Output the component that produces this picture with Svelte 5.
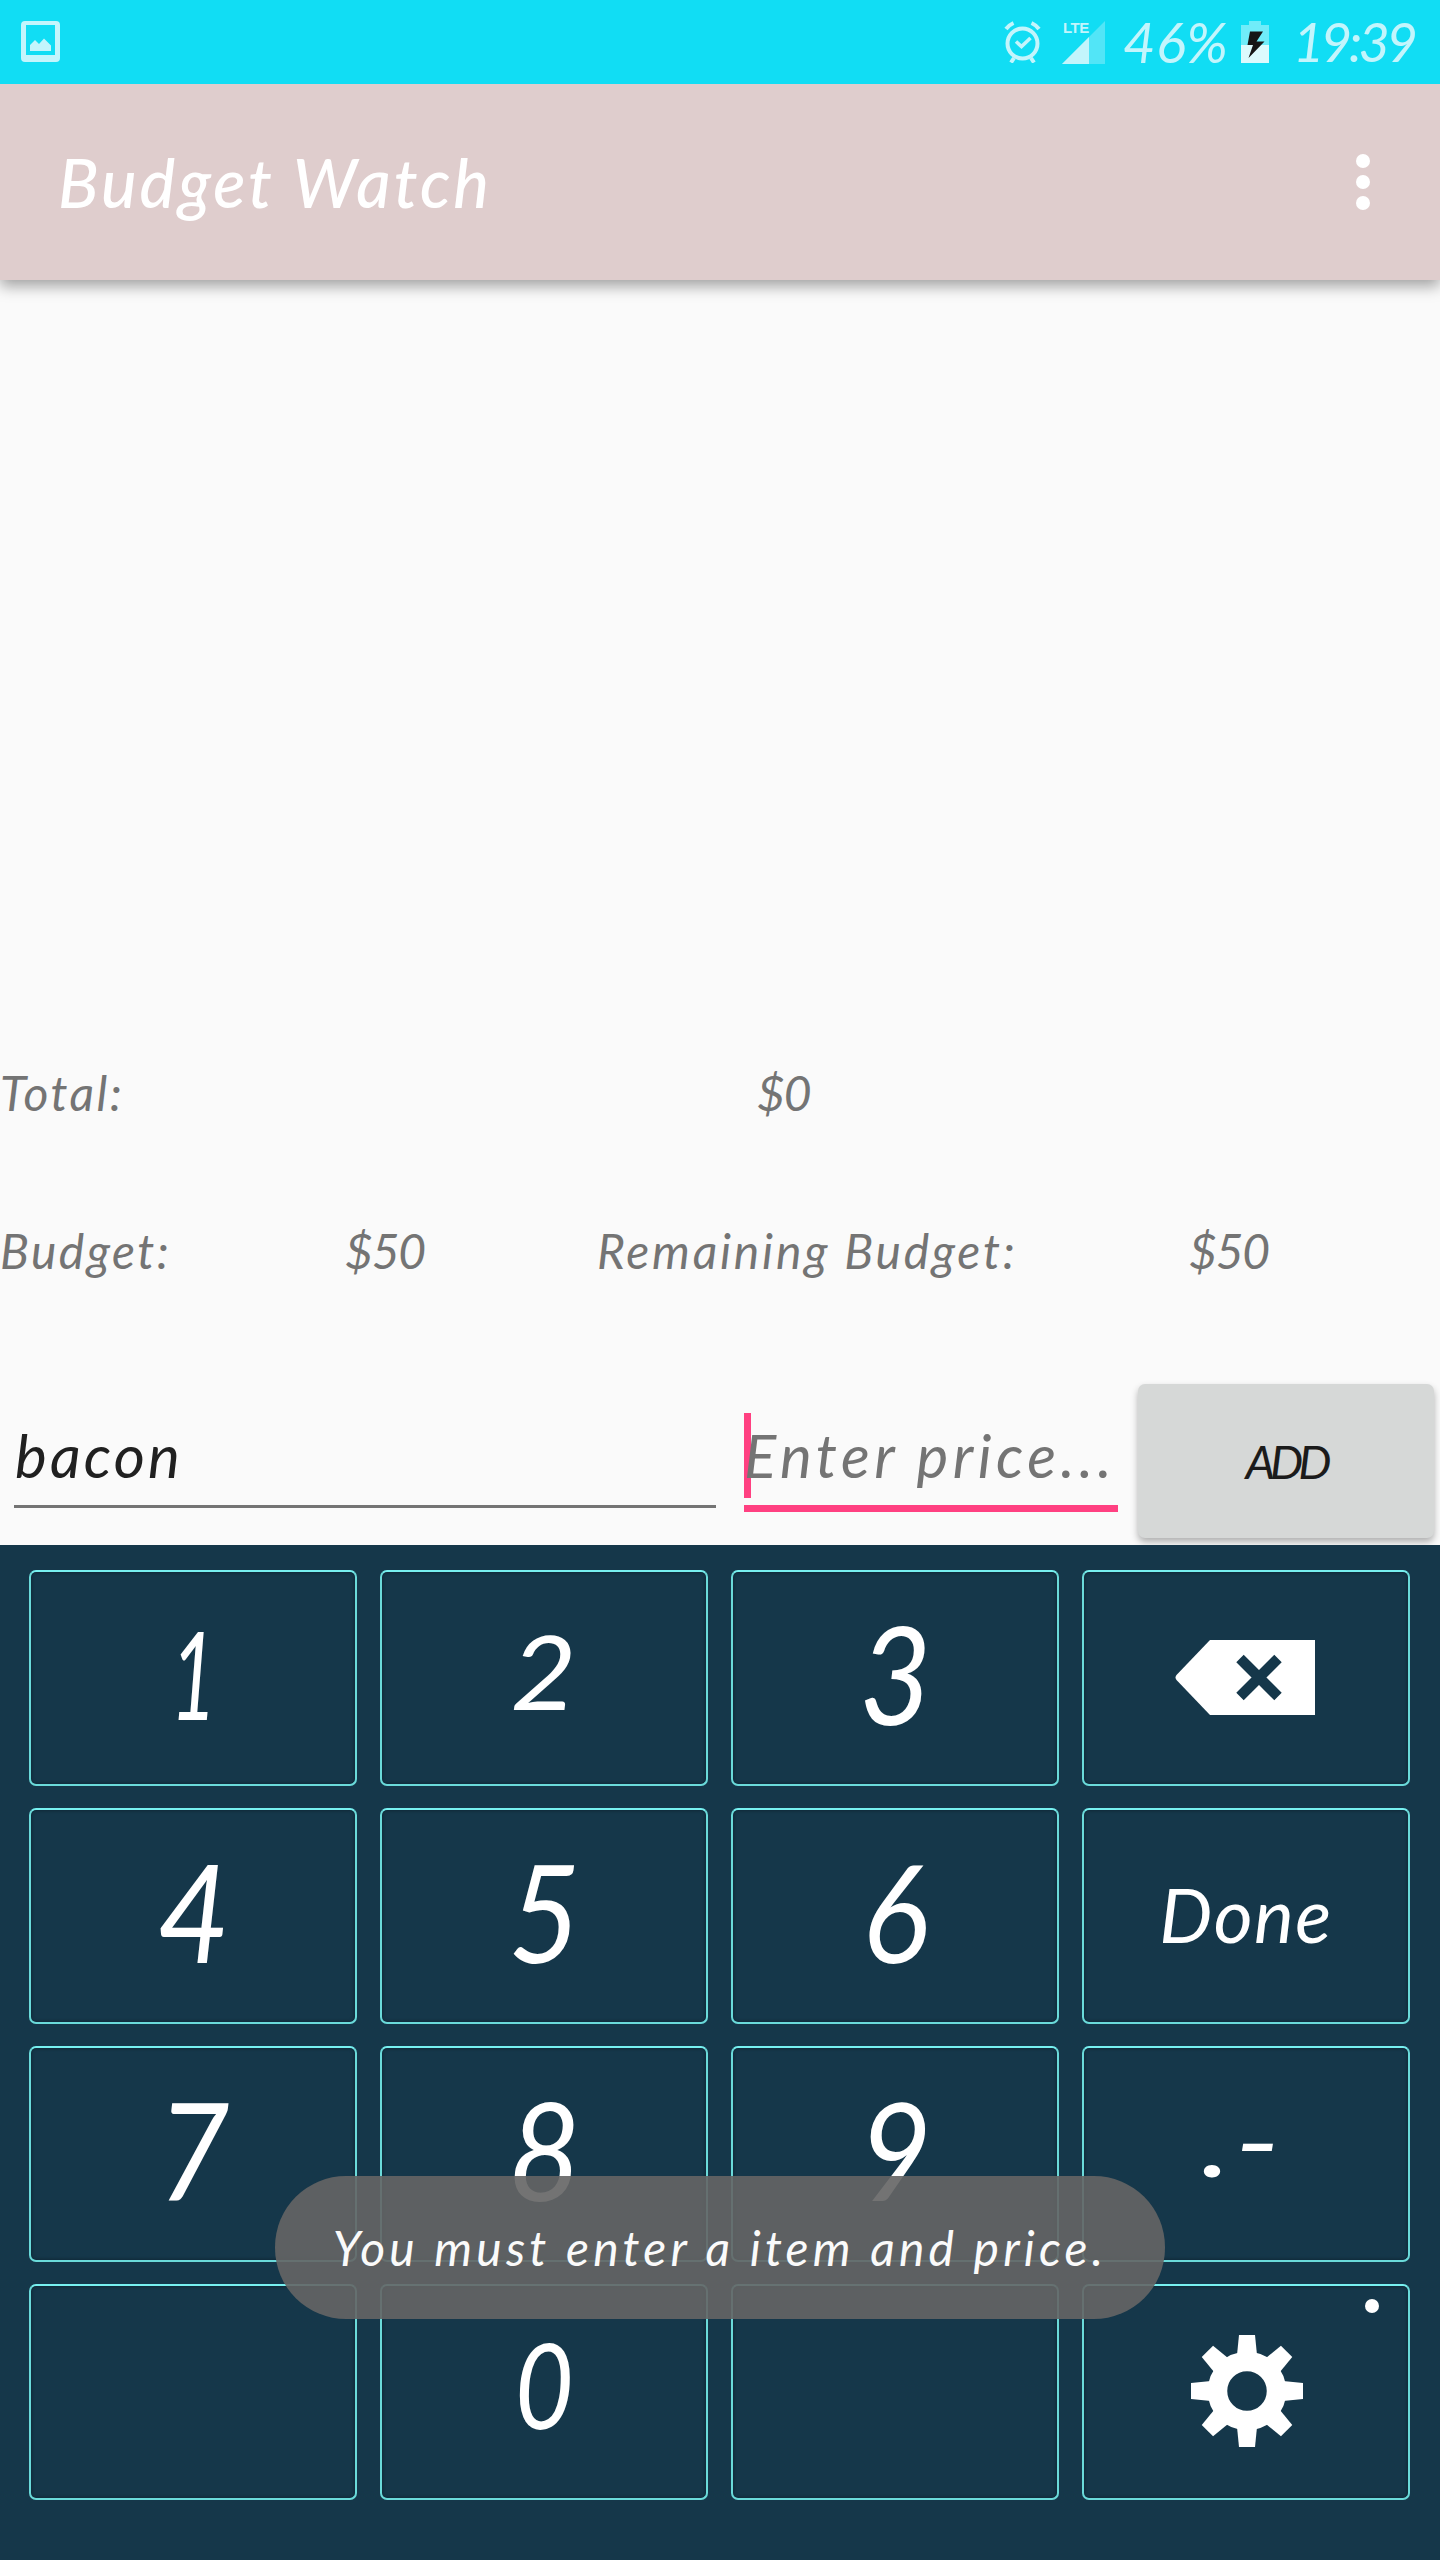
<script>
  const rows = [
    ['1', '2', '3', 'delete'],
    ['4', '5', '6', 'Done'],
    ['7', '8', '9', '.-'],
    ['', '0', '', 'settings']
  ];
  const keys = rows.flat();
  const classes = { Done: 'word', '.-': 'punct', 0: 'zero', 1: 'one', 2: 'two' };
  const teeth = [0, 45, 90, 135, 180, 225, 270, 315];
</script>

<div class="screen">
  <header class="status">
    <svg class="picture" width="39" height="42" viewBox="0 0 39 42">
      <path fill-rule="evenodd" d="M4 0H35Q39 0 39 4V37Q39 41 35 41H4Q0 41 0 37V4Q0 0 4 0ZM5 4V34H34V4Z" />
      <path d="M9 30V24L14 19L18 23L23 17.5L30 24.500V30Z" />
    </svg>
    <svg class="alarm" width="38" height="42" viewBox="0 0 38 42">
      <g fill="none" stroke="#c3f5fc" stroke-width="4">
        <circle cx="18.500" cy="22.500" r="15" />
        <path d="M12 20.500L17.500 25.500L26.500 17" stroke-width="3.600" />
        <path d="M2 8Q5 4 9.500 2M35 8Q32 4 27.500 2M10 37L7 41.500M27 37L30 41.500" />
      </g>
    </svg>
    <div class="signal">
      <svg width="43" height="43" viewBox="0 0 43 43">
        <path d="M0 43L43 0V43Z" opacity=".37" />
        <path d="M0 43L27 16V43Z" />
      </svg>
      <span>LTE</span>
    </div>
    <span class="percent">46%</span>
    <svg class="battery" width="28" height="42" viewBox="0 0 28 42">
      <path fill="#70ecf9" d="M0 4H8V0H20V4H28V24H0Z" />
      <path fill="#dcfafd" d="M0 24H28V42H0Z" />
      <path fill="#161616" d="M9 10.500H22L15.500 20.500H23.500L7.500 37L12 24H6.500Z" />
    </svg>
    <span class="clock">19:39</span>
  </header>

  <div class="appbar">
    <h1>Budget Watch</h1>
    <svg width="14" height="56" viewBox="0 0 14 56">
      <circle cx="7" cy="7" r="7" /><circle cx="7" cy="28" r="7" /><circle cx="7" cy="49" r="7" />
    </svg>
  </div>

  <main>
    <div class="list"></div>
    <div class="sums total">
      <span>Total:</span><span class="money">$0</span>
    </div>
    <div class="sums budget">
      <span>Budget:</span><span class="money">$50</span>
      <span class="remaining">Remaining Budget:</span><span class="money">$50</span>
    </div>
    <div class="entry">
      <div class="field item">bacon</div>
      <div class="field price"><i class="caret"></i><span>Enter price...</span></div>
      <button class="add">ADD</button>
    </div>
  </main>

  <div class="keypad">
    {#each keys as key}
      <div class="key {classes[key] ?? ''}">
        {#if key === 'delete'}
          <svg class="erase" width="140" height="75" viewBox="0 0 140 75">
            <path fill="#fff" d="M35 0H140V75H35L1.500 40Q-.5 37.500 1.500 35Z" />
            <path stroke="#15374a" stroke-width="10.500" d="M65 18.500L103 56.500M103 18.500L65 56.500" />
          </svg>
        {:else if key === 'settings'}
          <svg class="gear" width="112" height="112" viewBox="-56 -56 112 112">
            <circle r="29.500" fill="none" stroke="#fff" stroke-width="19.500" />
            {#each teeth as angle}
              <path fill="#fff" d="M-10 -36L-8 -56H8L10 -36Z" transform="rotate({angle})" />
            {/each}
          </svg>
          <i class="more"></i>
        {:else}
          <span>{key}</span>
        {/if}
      </div>
    {/each}
  </div>

  <div class="toast"><span>You must enter a item and price.</span></div>
</div>

<style>
  :global(body) { margin: 0; }
  .screen {
    position: relative;
    width: 1440px;
    height: 2560px;
    display: flex;
    flex-direction: column;
    overflow: hidden;
    background: #fafafa;
    font-family: Lato, "Open Sans", sans-serif;
    font-style: italic;
    white-space: nowrap;
  }
  .status {
    position: relative;
    z-index: 1;
    height: 84px;
    box-sizing: border-box;
    padding: 0 26px 0 21px;
    display: flex;
    align-items: center;
    background: #11ddf4;
    color: #c3f5fc;
    fill: #c3f5fc;
    font-size: 56px;
    line-height: 84px;
  }
  .alarm { margin-left: auto; }
  .signal { position: relative; width: 43px; height: 43px; margin-left: 20px; line-height: 0; }
  .signal span {
    position: absolute;
    left: 1px;
    top: -1px;
    font: bold 15px/15px "Liberation Sans", sans-serif;
    letter-spacing: -.5px;
  }
  .percent { width: 104px; margin-left: 18px; letter-spacing: .5px; }
  .battery { margin-left: 14px; }
  .clock { width: 121px; margin-left: 24px; font-size: 54px; letter-spacing: -3.5px; }
  .appbar {
    position: relative;
    height: 196px;
    box-sizing: border-box;
    padding: 0 70px 0 58px;
    display: flex;
    align-items: center;
    justify-content: space-between;
    background: #dfcdcd;
    box-shadow: 0 6px 14px rgba(0, 0, 0, .36);
    color: #fff;
    fill: #fff;
  }
  h1 { margin: 0; font-size: 67px; line-height: 80px; font-weight: 500; letter-spacing: 3px; }
  main { height: 1265px; display: flex; flex-direction: column; }
  .list { flex: 1; }
  .sums { height: 158px; display: grid; align-items: center; color: #747474; font-size: 48px; letter-spacing: 2.5px; }
  .total { grid-template-columns: 757px 1fr; }
  .budget { grid-template-columns: 345px 252px 592px 1fr; }
  .money { letter-spacing: -1.2px; }
  .remaining { letter-spacing: 2.8px; }
  .entry {
    height: 216px;
    box-sizing: border-box;
    padding: 55px 6px 0 14px;
    display: grid;
    grid-template-columns: 702px 374px 296px;
    column-gap: 28px;
    align-items: start;
  }
  .field { position: relative; height: 84px; padding-top: 37px; line-height: 68px; font-size: 60px; }
  .item { border-bottom: 3px solid #747474; color: #202020; letter-spacing: 3.2px; text-indent: 1px; }
  .price { border-bottom: 7px solid #ff4081; color: #747474; letter-spacing: 4.5px; }
  .price span { position: relative; }
  .caret { position: absolute; left: 0; top: 29px; width: 7px; height: 85px; background: #ff4081; }
  .add {
    width: 296px;
    height: 154px;
    margin-left: -8px;
    padding: 0;
    border: 0;
    border-radius: 7px;
    background: #d6d8d7;
    box-shadow: 0 4px 7px rgba(0, 0, 0, .3);
    color: #1b1b1b;
    font: italic 47px/60px Lato, sans-serif;
    letter-spacing: -5px;
  }
  .keypad {
    position: relative;
    flex: 1;
    padding: 25px 30px 60px 29px;
    display: grid;
    grid-template-columns: repeat(4, 328px);
    grid-template-rows: repeat(4, 216px);
    gap: 22px 23px;
    background: #15374a;
  }
  .key {
    position: relative;
    box-sizing: border-box;
    padding-bottom: 10px;
    border: 2px solid #6adada;
    border-top-color: #77f0f0;
    border-radius: 7px;
    box-shadow: inset 0 0 3px 1px #102938;
    display: flex;
    align-items: center;
    justify-content: center;
    color: #fff;
    font-size: 136px;
    line-height: 202px;
  }
  .key span { display: block; transform: scaleX(.92); }
  .key.word { padding-bottom: 4px; font-size: 75px; letter-spacing: 1.5px; }
  .key.word span { transform: none; }
  .key.punct { padding-bottom: 32px; font-size: 100px; letter-spacing: 8px; }
  .key.punct span { transform: scaleX(1.3); }
  .key.two { padding-bottom: 14px; font-size: 102px; }
  .key.two span { transform: scaleX(1.12); }
  .key.one { font-size: 122px; }
  .key.one span { transform: scaleX(.65); }
  .key.zero { padding-bottom: 16px; font-size: 118px; }
  .key.zero span { transform: scaleX(.86); }
  .erase { margin: 9px 2px 0 0; }
  .gear { margin: 8px 0 0 2px; }
  .more {
    position: absolute;
    right: 29px;
    top: 13px;
    width: 14px;
    height: 14px;
    border-radius: 50%;
    background: #fff;
  }
  .toast {
    position: absolute;
    left: 275px;
    top: 2176px;
    width: 890px;
    height: 143px;
    border-radius: 71px;
    display: flex;
    align-items: center;
    justify-content: center;
    background: rgba(101, 101, 101, .906);
    color: #fafafa;
    font-size: 48px;
    letter-spacing: 4.2px;
  }
</style>
